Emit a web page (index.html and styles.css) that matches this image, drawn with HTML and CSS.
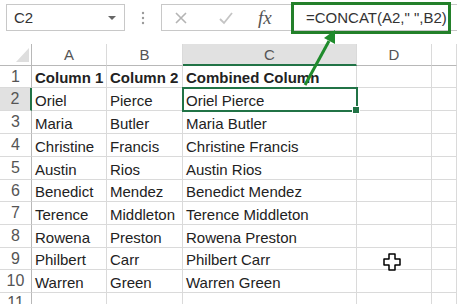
FILE: index.html
```html
<!DOCTYPE html>
<html lang="en">

<head>
    <meta charset="UTF-8">
    <title>CONCAT example</title>
    <link rel="stylesheet" href="styles.css">
</head>

<body>
    <div class="formula-bar">
        <div class="name-box">
            <span>C2</span>
            <span class="drop"></span>
        </div>
        <svg class="grip" width="4" height="14" viewBox="0 0 4 14">
            <circle cx="2" cy="2" r="1.2" fill="#9a9a9a" />
            <circle cx="2" cy="7" r="1.2" fill="#9a9a9a" />
            <circle cx="2" cy="12" r="1.2" fill="#9a9a9a" />
        </svg>
        <div class="formula-box">
            <svg class="tool" width="14" height="14" viewBox="0 0 14 14">
                <path d="M2 2 L12 12 M12 2 L2 12" stroke="#b4b4b4" stroke-width="1.6" fill="none" />
            </svg>
            <svg class="tool check" width="16" height="14" viewBox="0 0 16 14">
                <path d="M2 8 L6 12 L14 2" stroke="#c4c4c4" stroke-width="1.8" fill="none" />
            </svg>
            <span class="fx">fx</span>
            <div class="formula">=CONCAT(A2," ",B2)</div>
        </div>
    </div>

    <div class="sheet">
        <div class="corner"><span class="tri"></span></div>
        <div class="colhead">A</div>
        <div class="colhead">B</div>
        <div class="colhead selected">C</div>
        <div class="colhead">D</div>
        <div class="colhead"></div>

        <div class="rowhead">1</div>
        <div class="cell bold">Column 1</div>
        <div class="cell bold">Column 2</div>
        <div class="cell bold">Combined Column</div>
        <div class="cell"></div>
        <div class="cell"></div>

        <div class="rowhead selected">2</div>
        <div class="cell">Oriel</div>
        <div class="cell">Pierce</div>
        <div class="cell active">Oriel Pierce</div>
        <div class="cell"></div>
        <div class="cell"></div>

        <div class="rowhead">3</div>
        <div class="cell">Maria</div>
        <div class="cell">Butler</div>
        <div class="cell">Maria Butler</div>
        <div class="cell"></div>
        <div class="cell"></div>

        <div class="rowhead">4</div>
        <div class="cell">Christine</div>
        <div class="cell">Francis</div>
        <div class="cell">Christine Francis</div>
        <div class="cell"></div>
        <div class="cell"></div>

        <div class="rowhead">5</div>
        <div class="cell">Austin</div>
        <div class="cell">Rios</div>
        <div class="cell">Austin Rios</div>
        <div class="cell"></div>
        <div class="cell"></div>

        <div class="rowhead">6</div>
        <div class="cell">Benedict</div>
        <div class="cell">Mendez</div>
        <div class="cell">Benedict Mendez</div>
        <div class="cell"></div>
        <div class="cell"></div>

        <div class="rowhead">7</div>
        <div class="cell">Terence</div>
        <div class="cell">Middleton</div>
        <div class="cell">Terence Middleton</div>
        <div class="cell"></div>
        <div class="cell"></div>

        <div class="rowhead">8</div>
        <div class="cell">Rowena</div>
        <div class="cell">Preston</div>
        <div class="cell">Rowena Preston</div>
        <div class="cell"></div>
        <div class="cell"></div>

        <div class="rowhead">9</div>
        <div class="cell">Philbert</div>
        <div class="cell">Carr</div>
        <div class="cell">Philbert Carr</div>
        <div class="cell"></div>
        <div class="cell"></div>

        <div class="rowhead">10</div>
        <div class="cell">Warren</div>
        <div class="cell">Green</div>
        <div class="cell">Warren Green</div>
        <div class="cell"></div>
        <div class="cell"></div>

        <div class="rowhead">11</div>
        <div class="cell"></div>
        <div class="cell"></div>
        <div class="cell"></div>
        <div class="cell"></div>
        <div class="cell"></div>
    </div>

    <!-- annotation arrow pointing at the formula -->
    <svg class="arrow" width="457" height="304" viewBox="0 0 457 304">
        <line x1="305" y1="85" x2="329" y2="41" stroke="#1f8b2c" stroke-width="3" />
        <polygon points="335,30 324,38 335,44" fill="#1f8b2c" />
    </svg>

    <!-- excel cell cursor -->
    <svg class="cursor" width="18" height="18" viewBox="0 0 18 18">
        <path d="M6 1 H12 V6 H17 V12 H12 V17 H6 V12 H1 V6 H6 Z" fill="#fff" stroke="#000" stroke-width="1.5" stroke-linejoin="round" />
    </svg>
</body>

</html>
```

FILE: styles.css
```css
* {
    margin: 0;
    padding: 0;
    box-sizing: border-box;
}

body {
    width: 457px;
    height: 304px;
    overflow: hidden;
    background-color: #fff;
    font-family: "Liberation Sans", Arial, sans-serif;
    color: #222;
    position: relative;
}

.formula-bar {
    height: 44px;
    display: flex;
    align-items: flex-start;
    padding-top: 4px;
    padding-left: 6px;
}

.name-box {
    width: 119px;
    height: 27px;
    border: 1px solid #c8c8c8;
    display: flex;
    align-items: center;
    justify-content: space-between;
    padding: 0 8px 0 7px;
    font-size: 15px;
    color: #333;
}

.drop {
    width: 0;
    height: 0;
    border-left: 4px solid transparent;
    border-right: 4px solid transparent;
    border-top: 4px solid #666;
}

.grip {
    margin: 7px 16px 0 16px;
}

.formula-box {
    flex: 1;
    height: 27px;
    border: 1px solid #c8c8c8;
    border-right: none;
    display: flex;
    align-items: center;
    padding-left: 12px;
}

.tool {
    margin-right: 30px;
}

.check {
    margin-right: 24px;
}

.fx {
    font-family: "Liberation Serif", serif;
    font-style: italic;
    font-size: 19px;
    color: #555;
    width: 33px;
}

.formula {
    width: 160px;
    height: 32px;
    border: 3px solid #23802a;
    display: flex;
    align-items: center;
    padding-left: 12px;
    font-size: 15px;
    color: #333;
    white-space: nowrap;
}

.sheet {
    display: grid;
    grid-template-columns: 32px 75px 76px 174px 75px 1fr;
    grid-template-rows: 22px 22px 23px 23px 23px 23px 22px 23px 23px 22px 23px 20px;
}

.corner,
.colhead,
.rowhead,
.cell {
    border-right: 1px solid #dadada;
    border-bottom: 1px solid #dadada;
}

.corner {
    border-right-color: #b8b8b8;
    border-bottom-color: #b8b8b8;
    position: relative;
}

.tri {
    position: absolute;
    right: 2px;
    bottom: 3px;
    width: 13px;
    height: 14px;
    background-color: #dedede;
    clip-path: polygon(100% 0, 100% 100%, 0 100%);
}

.colhead {
    border-bottom-color: #b8b8b8;
    font-size: 15px;
    color: #555;
    display: flex;
    align-items: center;
    justify-content: center;
}

.colhead.selected {
    background-color: #e1e1e1;
    border-bottom: 2px solid #217346;
}

.rowhead {
    border-right-color: #b8b8b8;
    font-size: 16px;
    color: #555;
    display: flex;
    align-items: center;
    justify-content: center;
}

.rowhead.selected {
    background-color: #e1e1e1;
    border-right: 2px solid #217346;
}

.cell {
    font-size: 15px;
    padding-left: 3px;
    display: flex;
    align-items: center;
    padding-top: 2px;
    white-space: nowrap;
}

.bold {
    font-weight: bold;
}

.active {
    position: relative;
    outline: 2px solid #217346;
    outline-offset: -1px;
}

.active::after {
    content: "";
    position: absolute;
    right: -4px;
    bottom: -4px;
    width: 6px;
    height: 6px;
    background-color: #217346;
    border: 1px solid #fff;
}

.arrow {
    position: absolute;
    left: 0;
    top: 0;
    pointer-events: none;
}

.cursor {
    position: absolute;
    left: 383px;
    top: 253px;
}
```
